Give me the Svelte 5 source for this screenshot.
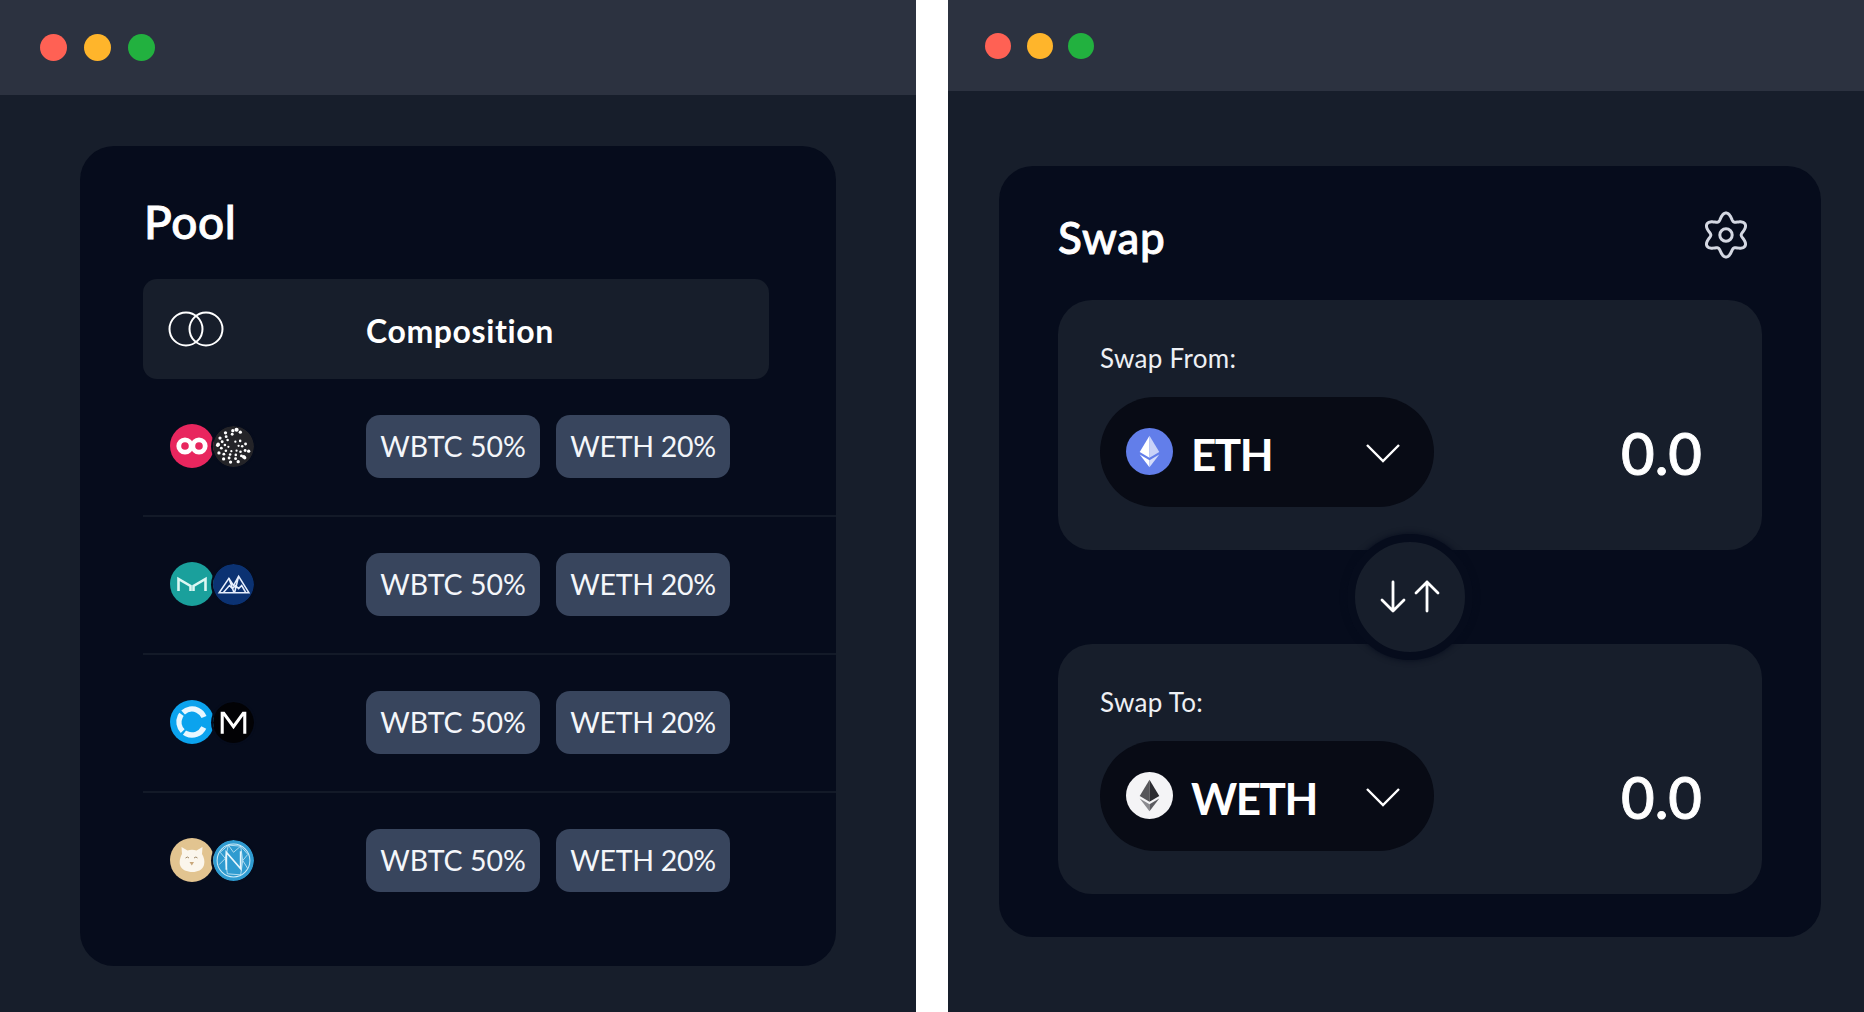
<script>
  const rows = ['a', 'b', 'c', 'd'];

  const gear = (() => {
    const pts = [];
    for (let i = 0; i < 180; i++) {
      const t = (i / 180) * Math.PI * 2;
      const r = 18.6 + 3.4 * Math.cos(6 * t);
      pts.push(`${(24 + r * Math.sin(t)).toFixed(2)},${(24 - r * Math.cos(t)).toFixed(2)}`);
    }
    return pts.join(' ');
  })();

  const iotaDots = (() => {
    const d = [];
    const rings = [[5, 5, 1.1], [8.5, 8, 1.25], [12, 10, 1.4], [15.5, 11, 1.6]];
    rings.forEach(([r, n, s], k) => {
      for (let i = 0; i < n; i++) {
        const a = (i / n) * Math.PI * 1.7 - 1.2 + k * 0.5;
        d.push({ x: 20 + r * Math.cos(a), y: 20 + r * Math.sin(a), r: s });
      }
    });
    d.push({ x: 23, y: 3.6, r: 2 }, { x: 5, y: 18, r: 1.8 }, { x: 30, y: 30, r: 1.8 });
    return d;
  })();
</script>

{#snippet ethLogo(a, b, c, d)}
  <polygon points="24,8 14,24.5 24,30.5" fill={a} />
  <polygon points="24,8 34,24.5 24,30.5" fill={b} />
  <polygon points="14,27 24,40 24,33" fill={c} />
  <polygon points="34,27 24,40 24,33" fill={d} />
{/snippet}

{#snippet token(kind)}
  {#if kind === 'a'}
    <svg class="coin first" viewBox="0 0 44 44">
      <circle cx="22" cy="22" r="22" fill="#e8265e" />
      <circle cx="15" cy="22" r="8.6" fill="#fff" />
      <circle cx="29" cy="22" r="8.6" fill="#fff" />
      <circle cx="15" cy="22" r="3.8" fill="#e8265e" />
      <circle cx="29" cy="22" r="3.8" fill="#e8265e" />
    </svg>
    <svg class="coin second" viewBox="0 0 40 40">
      <circle cx="20" cy="20" r="20" fill="#242428" />
      {#each iotaDots as p}<circle cx={p.x} cy={p.y} r={p.r} fill="#fff" />{/each}
    </svg>
  {:else if kind === 'b'}
    <svg class="coin first" viewBox="0 0 44 44">
      <circle cx="22" cy="22" r="22" fill="#1aa09c" />
      <path d="M8.5 29V17l12 7v5M35.5 29V17l-12 7v5" fill="none" stroke="#dcf7f3" stroke-width="2.600" />
    </svg>
    <svg class="coin second" viewBox="0 0 40 40">
      <circle cx="20" cy="20" r="20" fill="#0b3272" />
      <path d="M6 28 15.500 14 20 21l5-9 10 16zM10 28l6-7 3 3 3-3 3 3 3-3 4 7M15.500 14l5 14M25 12l-4 16" fill="none" stroke="#e6eefc" stroke-width="1.5" />
    </svg>
  {:else if kind === 'c'}
    <svg class="coin first" viewBox="0 0 44 44">
      <circle cx="22" cy="22" r="22" fill="#0ba3ee" />
      <circle cx="22" cy="22" r="13" fill="none" stroke="#e9f7ff" stroke-width="5.400" stroke-dasharray="22.7 2.300 18.200 2.300 25 11.300" transform="rotate(25 22 22)" />
    </svg>
    <svg class="coin second" viewBox="0 0 40 40">
      <circle cx="20" cy="20" r="20" fill="#020205" />
      <path d="M9 31V11h1.500L20 24 29.500 11H31v20" fill="none" stroke="#fff" stroke-width="3" />
    </svg>
  {:else}
    <svg class="coin first" viewBox="0 0 44 44">
      <circle cx="22" cy="22" r="22" fill="#e2c490" />
      <path d="M10 27c-1-5 1-9 2-11l-.5-7 6 3.500c3-1 6-1 9 0l6-3.500-.5 7c2 3 3 7 2 11-1.500 5-6.500 7-11.500 7s-11-2-12.500-7z" fill="#fbf6ec" />
      <path d="M15.500 20q2-2 3.500 0M24 20q2-2 3.500 0" fill="none" stroke="#a08a6a" stroke-width="1" />
      <path d="M19.500 24h4.500l-2.200 3.500z" fill="#c9a77a" />
    </svg>
    <svg class="coin second" viewBox="0 0 40 40">
      <circle cx="20" cy="20" r="20" fill="#2f9bd0" />
      <circle cx="20" cy="20" r="16" fill="none" stroke="#cdeaf7" stroke-width="1" />
      <path d="M7 12 15 5 27 6 34 14M15 5 12 18 6 24M27 6 29 20 34 28M12 18 14 33M29 20 27 34M14 33 27 34M7 12 12 18M34 14 29 20M15 5 20 12 27 6" fill="none" stroke="#cdeaf7" stroke-width=".8" />
      <path d="M13 29V12l14 16V11" fill="none" stroke="#e8f6fc" stroke-width="1.700" />
    </svg>
  {/if}
{/snippet}

<div class="page">
  <section class="win">
    <div class="bar big"><i class="red"></i><i class="amber"></i><i class="green"></i></div>
    <div class="body">
      <div class="card pool">
        <h2>Pool</h2>
        <div class="head">
          <svg class="rings" viewBox="0 0 56 36" fill="none" stroke="#fff" stroke-width="2">
            <circle cx="18" cy="18" r="16.500" />
            <circle cx="38" cy="18" r="16.500" />
          </svg>
          <span>Composition</span>
        </div>
        {#each rows as r}
          <div class="row">
            <div class="coins">{@render token(r)}</div>
            <div class="tag">WBTC 50%</div>
            <div class="tag">WETH 20%</div>
          </div>
        {/each}
      </div>
    </div>
  </section>

  <section class="win">
    <div class="bar"><i class="red"></i><i class="amber"></i><i class="green"></i></div>
    <div class="body right">
      <div class="card swap">
        <div class="top">
          <h2>Swap</h2>
          <svg class="gear" viewBox="0 0 48 48" fill="none" stroke="#d4d8e2" stroke-width="3">
            <polygon points={gear} stroke-linejoin="round" />
            <circle cx="24" cy="24" r="6.200" />
          </svg>
        </div>
        <div class="panels">
          <div class="panel">
            <div class="label">Swap From:</div>
            <div class="line">
              <div class="select">
                <svg class="tk" viewBox="0 0 48 48">
                  <circle cx="24" cy="24" r="24" fill="#627eea" />
                  {@render ethLogo('#fff', '#c9d3f8', '#fff', '#d4dcfa')}
                </svg>
                <span class="name">ETH</span>
                <svg class="chev" viewBox="0 0 34 20" fill="none" stroke="#fff" stroke-width="2.400"><path d="M1 2l16 16L33 2" /></svg>
              </div>
              <div class="val">0.0</div>
            </div>
          </div>
          <div class="panel">
            <div class="label">Swap To:</div>
            <div class="line">
              <div class="select">
                <svg class="tk" viewBox="0 0 48 48">
                  <circle cx="24" cy="24" r="24" fill="#f4f4f6" />
                  {@render ethLogo('#555559', '#2c2c31', '#8a8a8f', '#5c5c61')}
                </svg>
                <span class="name">WETH</span>
                <svg class="chev" viewBox="0 0 34 20" fill="none" stroke="#fff" stroke-width="2.400"><path d="M1 2l16 16L33 2" /></svg>
              </div>
              <div class="val">0.0</div>
            </div>
          </div>
          <div class="flip">
            <svg viewBox="0 0 60 34" fill="none" stroke="#fff" stroke-width="2.800" stroke-linecap="round" stroke-linejoin="round">
              <path d="M13 2v29M2 20l11 11 11-11" />
              <path d="M47 31V2M36 13 47 2l11 11" />
            </svg>
          </div>
        </div>
      </div>
    </div>
  </section>
</div>

<style>
  :global(body) { margin: 0; background: #fff; }
  .page {
    display: flex;
    justify-content: space-between;
    width: 1864px;
    height: 1012px;
    overflow: hidden;
    font-family: Lato, "Liberation Sans", sans-serif;
    color: #fff;
  }
  .win { width: 916px; display: flex; flex-direction: column; background: #171e2b; }
  .bar {
    height: 91px;
    background: #2c3240;
    display: flex;
    align-items: center;
    gap: 15.500px;
    padding-left: 37px;
    padding-top: 1px;
    box-sizing: border-box;
  }
  .bar.big { height: 95px; gap: 17px; padding-left: 40px; padding-top: 0; }
  .bar i { width: 26px; height: 26px; border-radius: 50%; display: block; }
  .bar.big i { width: 27px; height: 27px; }
  .red { background: #ff6154; }
  .amber { background: #ffb52b; }
  .green { background: #22b13f; }
  .body { flex: 1; padding: 51px 0 0 80px; }
  .body.right { padding: 75px 0 0 51px; }
  .card { background: #060c1c; border-radius: 34px; box-sizing: border-box; }
  .pool { width: 756px; height: 820px; padding: 51px 0 0 63px; }
  h2 { margin: 0; font-weight: 500; -webkit-text-stroke: 0.9px #fff; }
  .pool h2 { font-size: 46px; line-height: 50px; height: 82px; padding-left: 1px; letter-spacing: 0.6px; }
  .head {
    height: 100px;
    width: 626px;
    background: #171e2b;
    border-radius: 14px;
    display: flex;
    align-items: center;
    padding-left: 25px;
    box-sizing: border-box;
    font-size: 32px;
    font-weight: 700;
    letter-spacing: 0.6px;
  }
  .head span { padding-top: 2px; }
  .rings { width: 56px; height: 36px; margin-right: 142px; flex: none; }
  .row {
    height: 138px;
    box-sizing: border-box;
    display: flex;
    align-items: center;
    padding-left: 27px;
    padding-bottom: 2px;
    border-bottom: 2px solid #131a28;
  }
  .row:last-child { border-bottom-color: transparent; }
  .coins { width: 196px; display: flex; align-items: center; flex: none; }
  .coin { display: block; flex: none; }
  .coin.first { width: 44px; height: 44px; }
  .coin.second {
    width: 41px;
    height: 41px;
    margin-left: -1px;
    border-radius: 50%;
    box-shadow: 0 0 0 2px #060c1c;
    position: relative;
  }
  .tag {
    width: 174px;
    height: 63px;
    margin-right: 16px;
    border-radius: 14px;
    background: #38455d;
    display: flex;
    align-items: center;
    justify-content: center;
    font-size: 28.500px;
    color: #f4f6fa;
  }
  .tag:last-child { letter-spacing: -0.3px; }
  .swap { width: 822px; height: 771px; padding: 0 59px; }
  .top { height: 134px; display: flex; align-items: center; justify-content: space-between; padding-top: 8px; box-sizing: border-box; }
  .swap h2 { font-size: 44px; letter-spacing: 0.8px; }
  .gear { width: 48px; height: 48px; margin-right: 12px; margin-top: -4px; }
  .panels { position: relative; display: flex; flex-direction: column; gap: 94px; }
  .panel {
    height: 250px;
    border-radius: 34px;
    background: #171e2b;
    box-sizing: border-box;
    padding: 42px 60px 0 42px;
  }
  .label { font-size: 26px; line-height: 32px; color: #eef0f4; letter-spacing: 0.3px; }
  .line { display: flex; align-items: center; justify-content: space-between; margin-top: 23px; }
  .select {
    width: 334px;
    height: 110px;
    border-radius: 55px;
    background: #080b15;
    display: flex;
    align-items: center;
    box-sizing: border-box;
    padding-left: 26px;
    position: relative;
  }
  .tk { width: 47px; height: 47px; flex: none; margin-right: 18px; margin-top: -2px; }
  .name { font-size: 44px; font-weight: 700; letter-spacing: -1.500px; padding-top: 3px; }
  .chev { position: absolute; left: 266px; top: 46px; width: 34px; height: 20px; }
  .val { font-size: 58px; font-weight: 500; -webkit-text-stroke: 0.9px #fff; }
  .flip {
    position: absolute;
    left: 289px;
    top: 234px;
    width: 110px;
    height: 110px;
    border: 8px solid #060c1c;
    box-shadow: 0 0 6px #060c1c;
    border-radius: 50%;
    background: #171e2b;
    display: flex;
    align-items: center;
    justify-content: center;
  }
  .flip svg { width: 60px; height: 34px; }
</style>
